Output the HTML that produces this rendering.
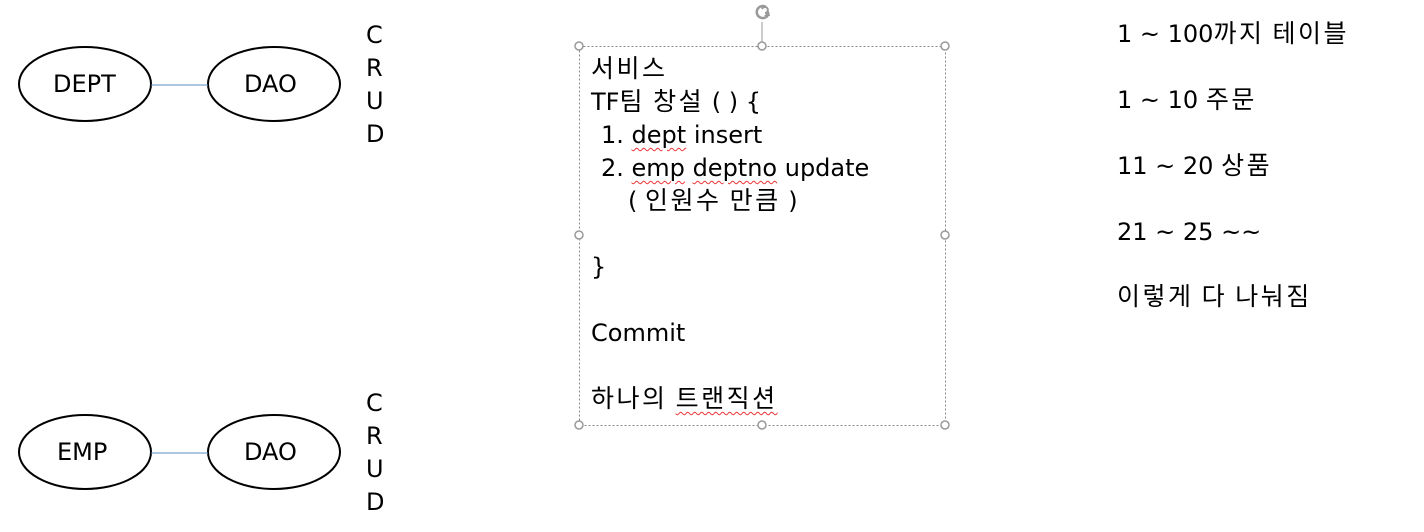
<!DOCTYPE html>
<html><head><meta charset="utf-8"><style>
body{margin:0;width:1424px;height:532px;background:#fff;position:relative;overflow:hidden;font-family:"DejaVu Sans","Noto Sans CJK KR",sans-serif;color:#000;}
.t{position:absolute;font-size:24px;line-height:33px;white-space:pre;}
.k{font-family:"Noto Sans CJK KR",sans-serif;font-size:25px;letter-spacing:2.5px;line-height:10px;}
.u{text-decoration:underline wavy #e33;text-decoration-thickness:1px;text-underline-offset:4px;}
svg{position:absolute;left:0;top:0;}
</style></head><body>
<svg width="1424" height="532">
<ellipse cx="85" cy="84" rx="66" ry="37" fill="none" stroke="#000" stroke-width="2"/>
<ellipse cx="274" cy="84" rx="66" ry="37" fill="none" stroke="#000" stroke-width="2"/>
<line x1="151" y1="85" x2="208" y2="85" stroke="#5b8fc7" stroke-width="1"/>
<ellipse cx="85" cy="452" rx="66" ry="37" fill="none" stroke="#000" stroke-width="2"/>
<ellipse cx="274" cy="452" rx="66" ry="37" fill="none" stroke="#000" stroke-width="2"/>
<line x1="151" y1="453" x2="208" y2="453" stroke="#5b8fc7" stroke-width="1"/>
<rect x="579.5" y="46.5" width="366" height="379" fill="none" stroke="#888" stroke-dasharray="2,2"/>
<line x1="762" y1="22" x2="762" y2="46" stroke="#999"/>
<g fill="#fff" stroke="#999" stroke-width="1.5">
<circle cx="579" cy="46" r="4"/><circle cx="762" cy="46" r="4"/><circle cx="945" cy="46" r="4"/>
<circle cx="579" cy="235" r="4"/><circle cx="945" cy="235" r="4"/>
<circle cx="579" cy="425" r="4"/><circle cx="762" cy="425" r="4"/><circle cx="945" cy="425" r="4"/>
</g>
<path d="M768 15 A6 6 0 1 1 766 7" fill="none" stroke="#999" stroke-width="2.5"/>
<path d="M762 9 A3 3 0 1 1 765 13" fill="none" stroke="#999" stroke-width="2"/>
<path d="M764 16 L770 16 L769 11 Z" fill="#999"/>
</svg>
<div class="t" style="left:53px;top:68px">DEPT</div>
<div class="t" style="left:244px;top:68px">DAO</div>
<div class="t" style="left:57px;top:436px">EMP</div>
<div class="t" style="left:244px;top:436px">DAO</div>
<div class="t" style="left:366px;top:19px">C
R
U
D</div>
<div class="t" style="left:366px;top:387px">C
R
U
D</div>
<div class="t" style="left:591px;top:53px"><span class="k">서비스</span>
TF<span class="k">팀 창설</span> ( ) {</div>
<div class="t" style="left:601px;top:119px">1. <span class="u">dept</span> insert
2. <span class="u">emp</span> <span class="u">deptno</span> update</div>
<div class="t" style="left:628px;top:185px">( <span class="k">인원수 만큼</span> )</div>
<div class="t" style="left:591px;top:251px">}

Commit

<span class="k">하나의 <span class="u">트랜직션</span></span></div>
<div class="t" style="left:1117px;top:18px">1 ~ 100<span class="k">까지 테이블</span></div>
<div class="t" style="left:1117px;top:84px">1 ~ 10 <span class="k">주문</span></div>
<div class="t" style="left:1117px;top:150px">11 ~ 20 <span class="k">상품</span></div>
<div class="t" style="left:1117px;top:216px">21 ~ 25 ~~</div>
<div class="t" style="left:1117px;top:281px"><span class="k">이렇게 다 나눠짐</span></div>
</body></html>
